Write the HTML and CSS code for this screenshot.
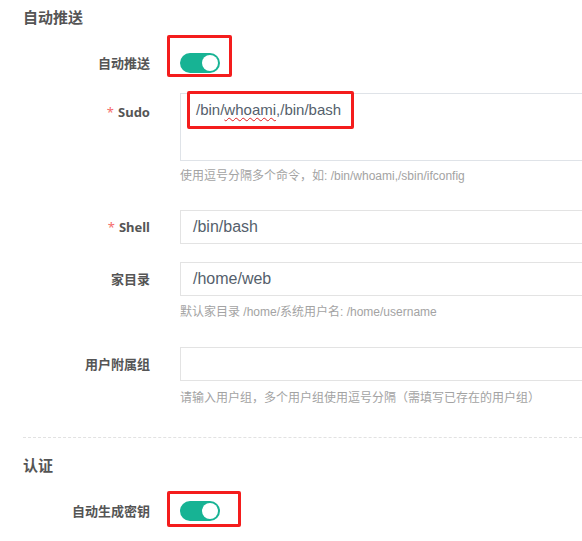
FILE: index.html
```html
<!DOCTYPE html>
<html lang="zh-CN">
<head>
<meta charset="utf-8">
<title>自动推送</title>
<link rel="stylesheet" href="styles.css">
</head>
<body>
<div class="page">
  <h3 class="section-title">自动推送</h3>

  <div class="form-row row-first">
    <div class="label">自动推送</div>
    <div class="control control-switch">
      <span class="switch">
        <span class="knob"></span>
        <span class="mark mark-switch-a"></span>
      </span>
    </div>
  </div>

  <div class="form-row row-sudo">
    <div class="label label-tall"><span class="req">*</span>Sudo</div>
    <div class="control">
      <div class="textarea">
        <span class="typed">/bin/<span class="spell">whoami</span>,/bin/bash</span>
        <span class="mark mark-sudo"></span>
      </div>
      <div class="help help-sudo">使用逗号分隔多个命令，如: /bin/whoami,/sbin/ifconfig</div>
    </div>
  </div>

  <div class="form-row row-shell">
    <div class="label"><span class="req">*</span>Shell</div>
    <div class="control">
      <div class="input">/bin/bash</div>
    </div>
  </div>

  <div class="form-row row-home">
    <div class="label">家目录</div>
    <div class="control">
      <div class="input">/home/web</div>
      <div class="help help-home">默认家目录 /home/系统用户名: /home/username</div>
    </div>
  </div>

  <div class="form-row row-group">
    <div class="label">用户附属组</div>
    <div class="control">
      <div class="input"></div>
      <div class="help help-group">请输入用户组，多个用户组使用逗号分隔（需填写已存在的用户组）</div>
    </div>
  </div>

  <div class="divider"></div>

  <h3 class="section-title section-auth">认证</h3>

  <div class="form-row row-key">
    <div class="label">自动生成密钥</div>
    <div class="control control-switch">
      <span class="switch">
        <span class="knob"></span>
        <span class="mark mark-switch-b"></span>
      </span>
    </div>
  </div>
</div>
</body>
</html>
```

FILE: styles.css
```css
html, body {
  margin: 0;
  padding: 0;
  background: #ffffff;
  overflow: hidden;
}

body {
  font-family: "Noto Sans", "Noto Sans CJK SC", sans-serif;
  color: #555;
}

.page {
  padding-left: 23px;
}

.section-title {
  margin: 0;
  padding-top: 7px;
  font-size: 15px;
  line-height: 20px;
  font-weight: bold;
  color: #555;
}

.section-auth {
  padding-top: 0;
  margin-top: 17px;
}

.form-row {
  display: flex;
  align-items: flex-start;
}

.label {
  width: 127px;
  flex: none;
  text-align: right;
  font-size: 13px;
  font-weight: bold;
  line-height: 34px;
  color: #555;
}

.label-tall {
  line-height: 38px;
}

.req {
  color: #f56c6c;
  font-weight: normal;
  margin-right: 4px;
}

.control {
  margin-left: 30px;
  flex: 1;
  min-width: 0;
}

.control-switch {
  height: 34px;
  display: flex;
  align-items: center;
}

.row-first { margin-top: 19px; }
.row-sudo { margin-top: 13px; }
.row-shell { margin-top: 24px; }
.row-home { margin-top: 18px; }
.row-group { margin-top: 25px; }
.row-key { margin-top: 19px; }

.switch {
  position: relative;
  display: block;
  width: 40px;
  height: 20px;
  border-radius: 10px;
  background: #17b394;
}

.knob {
  position: absolute;
  left: 22px;
  top: 2px;
  width: 16px;
  height: 16px;
  border-radius: 50%;
  background: #ffffff;
}

.mark {
  position: absolute;
  box-sizing: border-box;
  border: 3px solid #f41d1d;
  border-radius: 2px;
}

.mark-switch-a {
  left: -13px;
  top: -18px;
  width: 65px;
  height: 42px;
}

.mark-switch-b {
  left: -13px;
  top: -10px;
  width: 74px;
  height: 36px;
}

.textarea {
  position: relative;
  box-sizing: border-box;
  height: 68px;
  border: 1px solid #dfe3e8;
  border-right: none;
  padding: 6px 15px;
  font-family: "Liberation Sans", "Noto Sans CJK SC", sans-serif;
  font-size: 15px;
  line-height: 20px;
  color: #555f6c;
}

.spell {
  text-decoration: underline wavy #e02020;
  text-decoration-thickness: 1px;
  text-underline-offset: 2px;
}

.mark-sudo {
  left: 6px;
  top: -3px;
  width: 167px;
  height: 38px;
}

.input {
  box-sizing: border-box;
  height: 34px;
  border: 1px solid #e3e3e3;
  border-right: none;
  padding-left: 12px;
  font-family: "Liberation Sans", "Noto Sans CJK SC", sans-serif;
  font-size: 16px;
  line-height: 32px;
  color: #555f6c;
}

.help {
  font-family: "Liberation Sans", "Noto Sans CJK SC", sans-serif;
  font-size: 12px;
  line-height: 20px;
  color: #a3a3a3;
}

.help-sudo { margin-top: 5px; }
.help-home { margin-top: 6px; }
.help-group { margin-top: 7px; }

.divider {
  margin-top: 29px;
  height: 0;
  border-top: 1px dashed #e2e2e2;
}
```
